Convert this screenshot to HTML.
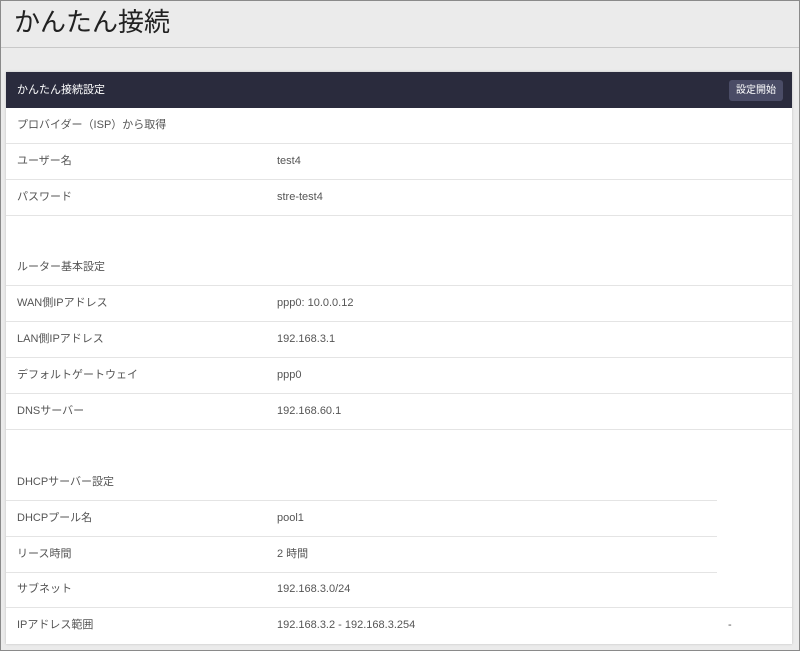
<!DOCTYPE html><html><head><meta charset="utf-8"><style>
body{margin:0;width:800px;height:651px;overflow:hidden;font-family:"Liberation Sans","Noto Sans CJK JP",sans-serif;}
.frame{position:absolute;left:0;top:0;width:798px;height:649px;border:1px solid #8a8a8a;background:#ebebeb;}
h1{position:absolute;left:13px;top:3px;margin:0;font-weight:normal;font-size:26px;color:#222;line-height:36px;}
.sep{position:absolute;left:0;top:46px;width:798px;height:1px;background:#c8c8c8;}
.panel{position:absolute;left:5px;top:71px;width:786px;height:572px;background:#fff;box-shadow:0 0 2px #bbb;}
.hd{height:36px;background:#2a2b3d;color:#fff;font-size:11px;line-height:36px;padding-left:11px;position:relative;}
.btn{position:absolute;right:9px;top:8px;height:21px;line-height:21px;padding:0 7px;background:#4a4c66;border-radius:3px;font-size:10px;}
.r{position:absolute;left:0;height:35px;border-bottom:1px solid #e4e4e4;font-size:11px;color:#555;line-height:35px;width:786px;}
.r span{position:absolute;left:11px}.r b{position:absolute;left:271px;font-weight:normal}
.s{width:711px}
</style></head><body><div class="frame">
<h1>かんたん接続</h1><div class="sep"></div>
<div class="panel"><div class="hd">かんたん接続設定<div class="btn">設定開始</div></div>
<div class="r" style="top:36px"><span>プロバイダー（ISP）から取得</span></div>
<div class="r" style="top:72px"><span>ユーザー名</span><b>test4</b></div>
<div class="r" style="top:108px"><span>パスワード</span><b>stre-test4</b></div>
<div class="r" style="top:178px"><span>ルーター基本設定</span></div>
<div class="r" style="top:214px"><span>WAN側IPアドレス</span><b>ppp0: 10.0.0.12</b></div>
<div class="r" style="top:250px"><span>LAN側IPアドレス</span><b>192.168.3.1</b></div>
<div class="r" style="top:286px"><span>デフォルトゲートウェイ</span><b>ppp0</b></div>
<div class="r" style="top:322px"><span>DNSサーバー</span><b>192.168.60.1</b></div>
<div class="r s" style="top:393px"><span>DHCPサーバー設定</span></div>
<div class="r s" style="top:429px"><span>DHCPプール名</span><b>pool1</b></div>
<div class="r s" style="top:465px"><span>リース時間</span><b>2 時間</b></div>
<div class="r" style="top:500px"><span>サブネット</span><b>192.168.3.0/24</b></div>
<div class="r" style="top:536px;border:0"><span>IPアドレス範囲</span><b>192.168.3.2 - 192.168.3.254</b><b style="left:722px">-</b></div>
</div></div></body></html>
